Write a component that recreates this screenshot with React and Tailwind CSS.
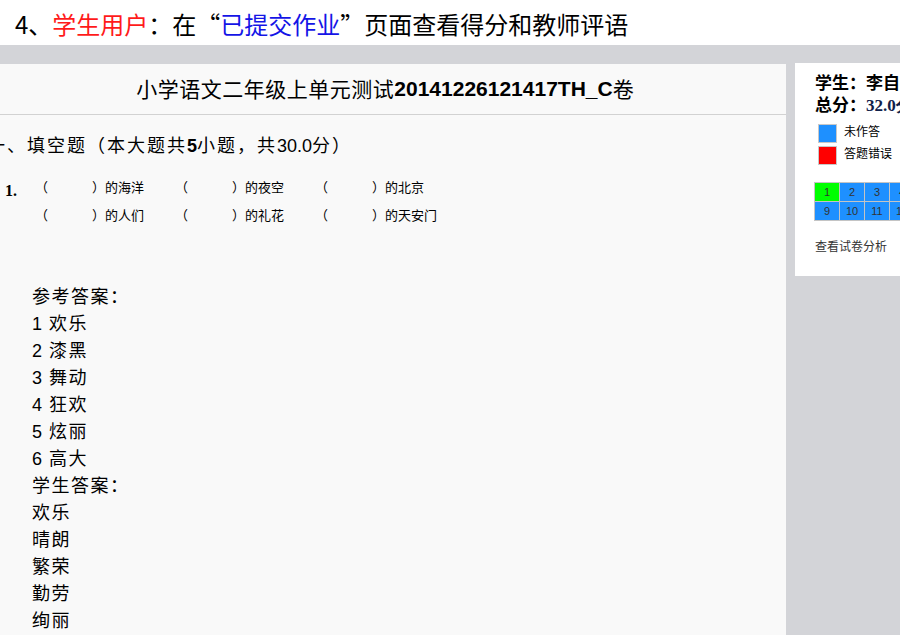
const cjk = { fontFamily: '"Noto Sans CJK SC", "Liberation Sans", sans-serif' };

const blanks = [
  ["的海洋", "的夜空", "的北京"],
  ["的人们", "的礼花", "的天安门"],
];

const refAnswers = ["欢乐", "漆黑", "舞动", "狂欢", "炫丽", "高大"];
const stuAnswers = ["欢乐", "晴朗", "繁荣", "勤劳", "绚丽"];

function QuestionGrid() {
  const rows = [
    [1, 2, 3, 4, 5, 6, 7, 8],
    [9, 10, 11, 12],
  ];
  return (
    <div className="flex flex-col border-l border-t border-[#c4c4c4] w-max">
      {rows.map((r, i) => (
        <div key={i} className="flex">
          {r.map((n) => (
            <div
              key={n}
              className={`w-[25px] h-[19px] flex items-center justify-center border-r border-b border-[#c4c4c4] text-[11px] text-[#333] ${
                n === 1 ? "bg-[#00ff00]" : "bg-[#1e90ff]"
              }`}
              style={{ fontFamily: '"Liberation Sans", sans-serif' }}
            >
              {n}
            </div>
          ))}
        </div>
      ))}
    </div>
  );
}

export default function App() {
  return (
    <div className="w-[900px] h-[635px] overflow-hidden flex flex-col bg-[#d3d4d8]" style={cjk}>
      {/* Banner */}
      <div className="h-[45px] bg-white flex items-center pl-[15px] text-[24px] leading-none text-black whitespace-nowrap pt-[2px]">
        <span>4、</span>
        <span className="text-[#ff1a1a]">学生用户</span>
        <span>：在“</span>
        <span className="text-[#1414e6]">已提交作业</span>
        <span>”页面查看得分和教师评语</span>
      </div>

      <div className="flex flex-1 min-h-0 pt-[19px] gap-[9px]">
        {/* Main paper */}
        <div className="ml-[-16px] w-[802px] shrink-0 bg-[#f9f9f9] flex flex-col">
          <div className="h-[51px] shrink-0 flex items-center justify-center border-b border-[#d2d2d2] text-[21px] text-black whitespace-nowrap">
            <span className="tracking-[0.5px]">小学语文二年级上单元测试</span>
            <span className="font-bold" style={{ fontFamily: '"Liberation Sans", sans-serif' }}>
              20141226121417TH_C
            </span>
            <span>卷</span>
          </div>

          <div className="pl-[3px] pt-[17px] text-[18px] leading-[24px] tracking-[2px] text-black whitespace-nowrap">
            一、填空题（本大题共<span className="font-bold tracking-normal" style={{ fontFamily: '"Liberation Sans", sans-serif' }}>5</span>小题，共<span className="tracking-normal" style={{ fontFamily: '"Liberation Sans", sans-serif' }}>30.0</span>分）
          </div>

          <div className="flex pt-[15px] pl-[21px]">
            <div
              className="w-[30px] text-[16px] font-bold leading-[28px] pt-[4px]"
              style={{ fontFamily: '"Liberation Serif", serif' }}
            >
              1.
            </div>
            <div className="flex flex-col text-[13px] leading-[28px] text-black">
              {blanks.map((row, i) => (
                <div key={i} className="flex h-[28px]">
                  {row.map((w, j) => (
                    <div key={j} className="w-[140px] flex whitespace-nowrap">
                      <span className="w-[57px]">（</span>
                      <span>）{w}</span>
                    </div>
                  ))}
                </div>
              ))}
            </div>
          </div>

          <div className="pl-[48px] pt-[53px] text-[18px] leading-[27px] tracking-[1.5px] text-black">
            <div className="h-[27px]">参考答案：</div>
            {refAnswers.map((a, i) => (
              <div key={i} className="h-[27px]">
                <span style={{ fontFamily: '"Liberation Sans", sans-serif' }}>{i + 1}</span> {a}
              </div>
            ))}
            <div className="h-[27px]">学生答案：</div>
            {stuAnswers.map((a, i) => (
              <div key={i} className="h-[27px]">{a}</div>
            ))}
          </div>
        </div>

        {/* Side panel */}
        <div className="self-start mt-[-1px] flex-1 min-w-[120px] bg-white pl-[20px] pt-[8px] pb-[21px] whitespace-nowrap">
          <div className="text-[17px] font-bold leading-[22px] text-black">学生：李自强</div>
          <div className="text-[17px] font-bold leading-[22px] text-black">
            总分：
            <span className="text-[#10204a]" style={{ fontFamily: '"Liberation Serif", serif' }}>
              32.0分
            </span>
          </div>
          <div className="mt-[7px] pl-[3px] flex flex-col gap-[3px] text-[12px] text-black">
            <div className="flex items-start gap-[7px]">
              <div className="w-[19px] h-[19px] bg-[#1e90ff] border border-[#c8c8c8]" />
              <span className="leading-[14px]">未作答</span>
            </div>
            <div className="flex items-start gap-[7px]">
              <div className="w-[19px] h-[19px] bg-[#ff0000] border border-[#c8c8c8]" />
              <span className="leading-[14px]">答题错误</span>
            </div>
          </div>
          <div className="mt-[17px] ml-[-1px]">
            <QuestionGrid />
          </div>
          <div className="mt-[16px] text-[12px] leading-[18px] text-[#333]">查看试卷分析</div>
        </div>
      </div>
    </div>
  );
}
